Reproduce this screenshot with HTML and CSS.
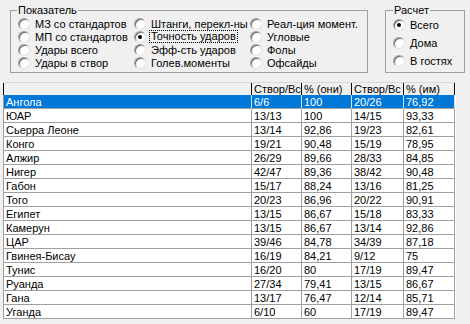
FILE: index.html
```html
<!DOCTYPE html>
<html lang="ru">
  <head>
    <meta charset="UTF-8" />
    <title>Показатель</title>
    <link rel="stylesheet" href="styles.css">
  </head>
  <body>
    <div class="options">
      <fieldset class="group metric">
        <legend>Показатель</legend>
        <div class="radios">
          <label class="radio"><span class="dot"></span>МЗ со стандартов</label>
          <label class="radio"><span class="dot"></span>МП со стандартов</label>
          <label class="radio"><span class="dot"></span>Удары всего</label>
          <label class="radio"><span class="dot"></span>Удары в створ</label>
          <label class="radio"><span class="dot"></span>Штанги, перекл-ны</label>
          <label class="radio"><span class="dot on"></span><span class="focus">Точность ударов</span></label>
          <label class="radio"><span class="dot"></span>Эфф-сть ударов</label>
          <label class="radio"><span class="dot"></span>Голев.моменты</label>
          <label class="radio"><span class="dot"></span>Реал-ция момент.</label>
          <label class="radio"><span class="dot"></span>Угловые</label>
          <label class="radio"><span class="dot"></span>Фолы</label>
          <label class="radio"><span class="dot"></span>Офсайды</label>
        </div>
      </fieldset>
      <fieldset class="group calc">
        <legend>Расчет</legend>
        <label class="radio"><span class="dot on"></span>Всего</label>
        <label class="radio"><span class="dot"></span>Дома</label>
        <label class="radio"><span class="dot"></span>В гостях</label>
      </fieldset>
    </div>

    <div class="grid">
      <div class="hd"></div>
      <div class="hd">Створ/Вс</div>
      <div class="hd">% (они)</div>
      <div class="hd">Створ/Вс</div>
      <div class="hd">% (им)</div>
    </div>
    <script>
      // строки таблицы
      var rows = [
        ["Ангола", "6/6", "100", "20/26", "76,92"],
        ["ЮАР", "13/13", "100", "14/15", "93,33"],
        ["Сьерра Леоне", "13/14", "92,86", "19/23", "82,61"],
        ["Конго", "19/21", "90,48", "15/19", "78,95"],
        ["Алжир", "26/29", "89,66", "28/33", "84,85"],
        ["Нигер", "42/47", "89,36", "38/42", "90,48"],
        ["Габон", "15/17", "88,24", "13/16", "81,25"],
        ["Того", "20/23", "86,96", "20/22", "90,91"],
        ["Египет", "13/15", "86,67", "15/18", "83,33"],
        ["Камерун", "13/15", "86,67", "13/14", "92,86"],
        ["ЦАР", "39/46", "84,78", "34/39", "87,18"],
        ["Гвинея-Бисау", "16/19", "84,21", "9/12", "75"],
        ["Тунис", "16/20", "80", "17/19", "89,47"],
        ["Руанда", "27/34", "79,41", "13/15", "86,67"],
        ["Гана", "13/17", "76,47", "12/14", "85,71"],
        ["Уганда", "6/10", "60", "17/19", "89,47"]
      ];
      var str = "";
      for (let i = 0; i < rows.length; i++) {
        for (let j = 0; j < rows[i].length; j++) {
          str += `<div class="cell ${i == 0 ? "sel" : ""}">${rows[i][j]}</div>`;
        }
      }
      document.querySelector(".grid").insertAdjacentHTML("beforeend", str);
    </script>
  </body>
</html>
```
FILE: styles.css
```css
* {
  margin: 0;
  padding: 0;
  box-sizing: border-box;
}

body {
  background-color: #f0f0f0;
  font-family: "Liberation Sans", Arial, sans-serif;
  font-size: 11px;
  color: #000;
  width: 470px;
  height: 324px;
  overflow: hidden;
}

.options {
  display: flex;
  align-items: flex-start;
  padding: 4px 0 0 10px;
}

.group {
  border: 1px solid #a0a0a0;
  padding: 0 4px 2px 6px;
  min-inline-size: 0;
}

.group legend {
  padding: 0 1px;
  line-height: 13px;
}

.metric {
  width: 358px;
  padding-bottom: 3px;
}

.calc {
  width: 80px;
  margin-left: 17px;
  padding-left: 7px;
}

.radios {
  display: grid;
  grid-template-columns: 116px 116px auto;
  grid-template-rows: repeat(4, 13px);
  grid-auto-flow: column;
  padding-left: 1px;
}

.radio {
  display: flex;
  align-items: center;
  gap: 5px;
  height: 13px;
  white-space: nowrap;
}

.calc .radio {
  height: 18px;
}

.calc .radio:first-of-type {
  margin-top: -1px;
}

.dot {
  width: 12px;
  height: 12px;
  flex: none;
  border-radius: 50%;
  background-color: #fff;
  border: 1px solid;
  border-color: #a0a0a0 #e3e3e3 #e3e3e3 #a0a0a0;
  box-shadow: inset 1px 1px 0 #696969;
  display: flex;
  align-items: center;
  justify-content: center;
}

.dot.on::after {
  content: "";
  width: 4px;
  height: 4px;
  border-radius: 50%;
  background-color: #000;
}

.focus {
  display: inline-block;
  margin-left: -1px;
  padding: 0 1px;
  line-height: 11px;
  outline: 1px dotted #000;
}

.grid {
  display: grid;
  grid-template-columns: 249px 50px 50px 52px 51px;
  width: 453px;
  margin: 9px 0 0 3px;
  border-top: 1px solid #d8d8d8;
  background-color: #fff;
}

.hd {
  height: 12px;
  line-height: 12px;
  padding-left: 2px;
  background-color: #f0f0f0;
  border-right: 1px solid #000;
  overflow: hidden;
  white-space: nowrap;
}

.hd:first-child {
  border-left: 1px solid #000;
}

.cell {
  height: 14px;
  line-height: 14px;
  padding: 0 0 1px 2px;
  border-right: 1px solid #a0a0a0;
  border-bottom: 1px solid #a0a0a0;
  overflow: hidden;
  white-space: nowrap;
}

.cell:nth-child(5n + 1) {
  border-left: 1px solid #a0a0a0;
}

.sel {
  background-color: #0078d7;
  color: #fff;
  border-right-color: #cfe3f5;
}
```
